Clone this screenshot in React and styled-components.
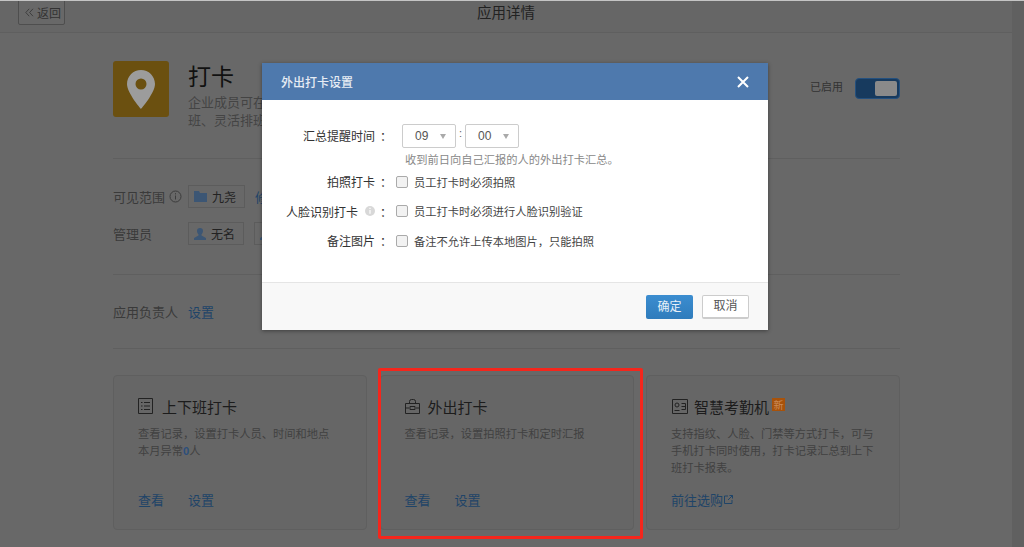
import React from "react";
import styled, { createGlobalStyle } from "styled-components";

const GlobalStyle = createGlobalStyle`
  html, body {
    margin: 0;
    padding: 0;
    height: 547px;
    overflow: hidden;
    background: #666;
    font-family: "Liberation Sans", "Noto Sans CJK SC", sans-serif;
  }
  * { box-sizing: border-box; }
`;

function App() {
  return (
    <>
      <GlobalStyle />
      <Screen>
        <Main>
          <Header>
            <BackButton>
              <svg width="9" height="9" viewBox="0 0 9 9" fill="none" stroke="#3a3a3a" strokeWidth="0.9">
                <path d="M4.2 0.8 0.8 4.5l3.4 3.7M8 0.8 4.6 4.5 8 8.2" />
              </svg>
              返回
            </BackButton>
            <HeaderTitle>应用详情</HeaderTitle>
          </Header>
          <Content>
            <Hero>
              <AppIcon>
                <svg width="28" height="39" viewBox="0 0 28 39">
                  <path
                    fillRule="evenodd"
                    fill="#9c9c9c"
                    d="M14 0C6.3 0 0 6.2 0 14c0 9 14 25 14 25s14-16 14-25C28 6.2 21.700 0 14 0zm0 8.500a5.500 5.500 0 1 1 0 11 5.500 5.500 0 0 1 0-11z"
                  />
                </svg>
              </AppIcon>
              <HeroText>
                <AppName>打卡</AppName>
                <AppDesc>企业成员可在手机上打卡，支持固定班、</AppDesc>
                <AppDesc>班、灵活排班等多种方式</AppDesc>
              </HeroText>
              <EnabledText>已启用</EnabledText>
              <Toggle>
                <ToggleKnob />
              </Toggle>
            </Hero>

            <Section>
              <InfoRow>
                <RowLabel>
                  可见范围
                  <svg width="13" height="13" viewBox="0 0 13 13" fill="none" stroke="#3c3c3c">
                    <circle cx="6.500" cy="6.500" r="5.500" />
                    <path d="M6.500 5.500v4M6.500 3.200v1.200" />
                  </svg>
                </RowLabel>
                <Tag>
                  <svg width="13" height="11" viewBox="0 0 13 11" fill="#3c5674">
                    <path d="M0 0h5l1 2h7v9H0z" />
                  </svg>
                  九尧
                </Tag>
                <RowLink>修改</RowLink>
              </InfoRow>
              <InfoRow>
                <RowLabel>管理员</RowLabel>
                <Tag>
                  <UserIcon />
                  无名
                </Tag>
                <Tag>
                  <UserIcon />
                  无名
                </Tag>
              </InfoRow>
            </Section>

            <OwnerSection>
              <RowLabel>应用负责人</RowLabel>
              <RowLink>设置</RowLink>
            </OwnerSection>

            <Cards>
              <Card>
                <CardTitle $gap={9}>
                  <svg width="15" height="16" viewBox="0 0 15 16" fill="none" stroke="#222">
                    <path d="M.5.500h14v15H.5z" />
                    <path d="M3 4.500h1.500M6 4.500h6M3 8h1.500M6 8h6M3 11.500h1.500M6 11.500h6" />
                  </svg>
                  上下班打卡
                </CardTitle>
                <CardDesc>
                  查看记录，设置打卡人员、时间和地点
                  <br />
                  本月异常<Count>0</Count>人
                </CardDesc>
                <CardLinks>
                  <CardLink>查看</CardLink>
                  <CardLink>设置</CardLink>
                </CardLinks>
              </Card>

              <Card>
                <CardTitle $gap={8}>
                  <svg width="15" height="15" viewBox="0 0 15 15" fill="none" stroke="#222">
                    <path d="M.5 4.500h14v10H.5zM4.500 4.500v-2a2 2 0 0 1 2-2h2a2 2 0 0 1 2 2v2" />
                    <path d="M.5 9h3.500M11 9h3.500M5 7.500h5v3H5z" />
                  </svg>
                  外出打卡
                </CardTitle>
                <CardDesc>查看记录，设置拍照打卡和定时汇报</CardDesc>
                <CardLinks>
                  <CardLink>查看</CardLink>
                  <CardLink>设置</CardLink>
                </CardLinks>
                <Highlight />
              </Card>

              <Card>
                <CardTitle $gap={6}>
                  <svg width="17" height="15" viewBox="0 0 17 15" fill="none" stroke="#222">
                    <path d="M1.500.500h15v14h-15z" />
                    <circle cx="6" cy="6" r="2" />
                    <path d="M3.500 11.500h5M10.500 4.500h4v6h-4M10.500 7.500h4" />
                  </svg>
                  智慧考勤机
                  <NewBadge>新</NewBadge>
                </CardTitle>
                <CardDesc>
                  支持指纹、人脸、门禁等方式打卡，可与
                  <br />
                  手机打卡同时使用，打卡记录汇总到上下
                  <br />
                  班打卡报表。
                </CardDesc>
                <CardLinks>
                  <CardLink>
                    前往选购
                    <svg width="9" height="9" viewBox="0 0 9 9" fill="none" stroke="#1f4468">
                      <path d="M4 1H.5v7.500H8V5M4 5l4.500-4.500M5.500.5h3v3" />
                    </svg>
                  </CardLink>
                </CardLinks>
              </Card>
            </Cards>
          </Content>
        </Main>
        <ScrollTrack />
      </Screen>

      <Modal>
        <ModalHeader>
          <ModalTitle>外出打卡设置</ModalTitle>
          <svg width="12" height="12" viewBox="0 0 12 12" stroke="#fff" strokeWidth="2">
            <path d="M1 1l10 10M11 1 1 11" />
          </svg>
        </ModalHeader>
        <ModalBody>
          <TimeRow>
            <FormLabel>汇总提醒时间</FormLabel>
            <Colon>：</Colon>
            <TimeControls>
              <SelectBox>
                09
                <Arrow />
              </SelectBox>
              <TimeSep>:</TimeSep>
              <SelectBox>
                00
                <Arrow />
              </SelectBox>
            </TimeControls>
          </TimeRow>
          <Hint>收到前日向自己汇报的人的外出打卡汇总。</Hint>
          <CheckRow>
            <FormLabel>拍照打卡</FormLabel>
            <Colon>：</Colon>
            <Checkbox />
            <CheckText>员工打卡时必须拍照</CheckText>
          </CheckRow>
          <CheckRow>
            <FormLabel>
              人脸识别打卡
              <svg width="10" height="10" viewBox="0 0 11 11">
                <circle cx="5.500" cy="5.500" r="5.500" fill="#d8d8d8" />
                <path d="M5.500 4.500v4M5.500 2v1.300" stroke="#fff" strokeWidth="1.300" />
              </svg>
            </FormLabel>
            <Colon>：</Colon>
            <Checkbox />
            <CheckText>员工打卡时必须进行人脸识别验证</CheckText>
          </CheckRow>
          <CheckRow>
            <FormLabel>备注图片</FormLabel>
            <Colon>：</Colon>
            <Checkbox />
            <CheckText>备注不允许上传本地图片，只能拍照</CheckText>
          </CheckRow>
        </ModalBody>
        <ModalFooter>
          <PrimaryButton>确定</PrimaryButton>
          <CancelButton>取消</CancelButton>
        </ModalFooter>
      </Modal>
    </>
  );
}

function UserIcon() {
  return (
    <svg width="12" height="12" viewBox="0 0 12 12" fill="#3c5674">
      <path d="M6 0a3 3 0 0 1 3 3c0 1.500-.8 2.800-1.500 3.400v1.100L12 10v2H0v-2l4.500-2.500V6.400C3.800 5.800 3 4.500 3 3a3 3 0 0 1 3-3z" />
    </svg>
  );
}

export default App;

const Screen = styled.div`
  display: flex;
  width: 1024px;
  height: 547px;
  border-top: 1px solid #c4c4c4;
  overflow: hidden;
`;

const Main = styled.div`
  width: 1012px;
  background: #686868;
`;

const ScrollTrack = styled.div`
  width: 12px;
  background: #606060;
`;

const Header = styled.div`
  position: relative;
  display: flex;
  align-items: center;
  justify-content: center;
  height: 32px;
  border-bottom: 1px solid #5f5f5f;
  background: #666;
`;

const BackButton = styled.div`
  position: absolute;
  left: 18px;
  top: -2px;
  display: flex;
  align-items: center;
  gap: 3px;
  width: 47px;
  height: 26px;
  padding-left: 6px;
  border: 1px solid #4e4e4e;
  border-radius: 2px;
  background: #686868;
  font-size: 12px;
  color: #333;
`;

const HeaderTitle = styled.div`
  margin-top: -10px;
  font-size: 14.500px;
  color: #222;
`;

const Content = styled.div`
  width: 787px;
  margin-left: 113px;
`;

const Hero = styled.div`
  display: flex;
  align-items: flex-start;
  height: 126px;
  padding-top: 28px;
  border-bottom: 1px solid #5f5f5f;
`;

const AppIcon = styled.div`
  display: flex;
  align-items: center;
  justify-content: center;
  width: 56px;
  height: 56px;
  border-radius: 3px;
  background: #6b5010;
`;

const HeroText = styled.div`
  width: 400px;
  margin: 2px 0 0 19px;
`;

const AppName = styled.div`
  margin-bottom: 3px;
  font-size: 23px;
  line-height: 28px;
  color: #111;
`;

const AppDesc = styled.div`
  font-size: 13px;
  line-height: 18px;
  color: #444;
`;

const EnabledText = styled.div`
  margin: 17px 12px 0 auto;
  font-size: 11px;
  line-height: 18px;
  color: #333;
`;

const Toggle = styled.div`
  display: flex;
  justify-content: flex-end;
  width: 45px;
  height: 21px;
  margin-top: 17px;
  padding: 2px;
  border-radius: 4px;
  background: #173a5e;
  border: 1px solid #24507e;
`;

const ToggleKnob = styled.div`
  width: 22px;
  border-radius: 2px;
  background: #8a8a8a;
`;

const Section = styled.div`
  display: flex;
  flex-direction: column;
  gap: 10px;
  height: 116px;
  padding-top: 24px;
  border-bottom: 1px solid #5f5f5f;
`;

const InfoRow = styled.div`
  display: flex;
  align-items: center;
  height: 27px;
`;

const RowLabel = styled.div`
  display: flex;
  align-items: center;
  gap: 4px;
  width: 75px;
  font-size: 13px;
  color: #3a3a3a;
  white-space: nowrap;
`;

const Tag = styled.div`
  display: flex;
  align-items: center;
  gap: 5px;
  height: 23px;
  margin-right: 10px;
  padding: 0 8px 0 5px;
  border: 1px solid #5c5c5c;
  font-size: 12px;
  color: #222;
`;

const RowLink = styled.span`
  font-size: 13px;
  color: #1f4468;
`;

const OwnerSection = styled.div`
  display: flex;
  align-items: center;
  height: 74px;
  border-bottom: 1px solid #5f5f5f;
`;

const Cards = styled.div`
  display: flex;
  justify-content: space-between;
  margin-top: 26px;
`;

const Card = styled.div`
  position: relative;
  display: flex;
  flex-direction: column;
  width: 254px;
  height: 155px;
  padding: 20px 0 0 24px;
  border: 1px solid #5f5f5f;
  border-radius: 4px;
  background: #666;
`;

const CardTitle = styled.div`
  display: flex;
  align-items: center;
  gap: ${(props) => props.$gap}px;
  height: 20px;
  font-size: 15px;
  color: #1c1c1c;
`;

const CardDesc = styled.div`
  margin-top: 10px;
  font-size: 11.250px;
  line-height: 17px;
  color: #414141;
`;

const Count = styled.span`
  color: #2c4f7c;
  font-weight: 700;
`;

const CardLinks = styled.div`
  display: flex;
  gap: 24px;
  margin-top: auto;
  margin-bottom: 20px;
`;

const CardLink = styled.span`
  display: flex;
  align-items: center;
  gap: 1px;
  font-size: 13px;
  color: #1f4468;
`;

const NewBadge = styled.span`
  display: flex;
  align-items: center;
  justify-content: center;
  width: 13px;
  height: 13px;
  margin: -3px 0 0 -3px;
  background: #a8520a;
  font-size: 10px;
  color: #c88a5a;
`;

const Highlight = styled.div`
  position: absolute;
  top: -8px;
  left: -3px;
  right: -10px;
  bottom: -10px;
  border: 3px solid #f5261c;
  border-radius: 2px;
`;

const Modal = styled.div`
  position: absolute;
  left: 262px;
  top: 63px;
  display: flex;
  flex-direction: column;
  width: 506px;
  height: 267px;
  background: #fff;
  box-shadow: 0 1px 4px rgba(0, 0, 0, 0.4);
`;

const ModalHeader = styled.div`
  display: flex;
  align-items: center;
  justify-content: space-between;
  height: 37px;
  padding: 0 19px;
  background: #4e79ad;
`;

const ModalTitle = styled.div`
  font-size: 12px;
  font-weight: 500;
  color: #e6ecf4;
`;

const ModalBody = styled.div`
  flex: 1;
  padding-top: 23px;
`;

const TimeRow = styled.div`
  display: flex;
  align-items: center;
  height: 25px;
`;

const FormLabel = styled.div`
  display: flex;
  align-items: center;
  justify-content: flex-end;
  gap: 7px;
  width: 113px;
  font-size: 12px;
  color: #333;
  white-space: nowrap;
`;

const Colon = styled.span`
  width: 14px;
  padding-left: 5px;
  font-size: 12px;
  color: #333;
`;

const TimeControls = styled.div`
  display: flex;
  align-items: center;
  margin-left: 13px;
`;

const SelectBox = styled.div`
  position: relative;
  width: 54px;
  height: 24px;
  padding-left: 12px;
  border: 1px solid #ccc;
  border-radius: 2px;
  font-size: 12px;
  line-height: 22px;
  color: #555;
`;

const Arrow = styled.span`
  position: absolute;
  right: 9px;
  top: 9px;
  border-left: 3px solid transparent;
  border-right: 3px solid transparent;
  border-top: 5px solid #aaa;
`;

const TimeSep = styled.span`
  width: 9px;
  margin-top: -6px;
  font-size: 11px;
  text-align: center;
  color: #666;
`;

const Hint = styled.div`
  height: 15px;
  margin: 4px 0 0 143px;
  font-size: 11.250px;
  line-height: 16px;
  color: #888;
`;

const CheckRow = styled.div`
  display: flex;
  align-items: center;
  height: 29.500px;
`;

const Checkbox = styled.span`
  width: 12px;
  height: 12px;
  margin-left: 7px;
  border: 1px solid #aaa;
  border-radius: 2px;
  background: #f2f2f2;
`;

const CheckText = styled.span`
  margin-left: 6px;
  font-size: 11.250px;
  color: #444;
`;

const ModalFooter = styled.div`
  display: flex;
  justify-content: flex-end;
  gap: 9px;
  height: 48px;
  padding: 12px 19px 0 0;
  border-top: 1px solid #e5e5e5;
  background: #f8f8f8;
`;

const PrimaryButton = styled.div`
  width: 47px;
  height: 24px;
  border-radius: 2px;
  background: linear-gradient(#3b8dd0, #2f7cbc);
  font-size: 12px;
  line-height: 24px;
  text-align: center;
  color: #e8f0f8;
`;

const CancelButton = styled.div`
  width: 47px;
  height: 24px;
  border: 1px solid #ccc;
  border-bottom-width: 2px;
  border-radius: 2px;
  background: #fff;
  font-size: 12px;
  line-height: 21px;
  text-align: center;
  color: #555;
`;
